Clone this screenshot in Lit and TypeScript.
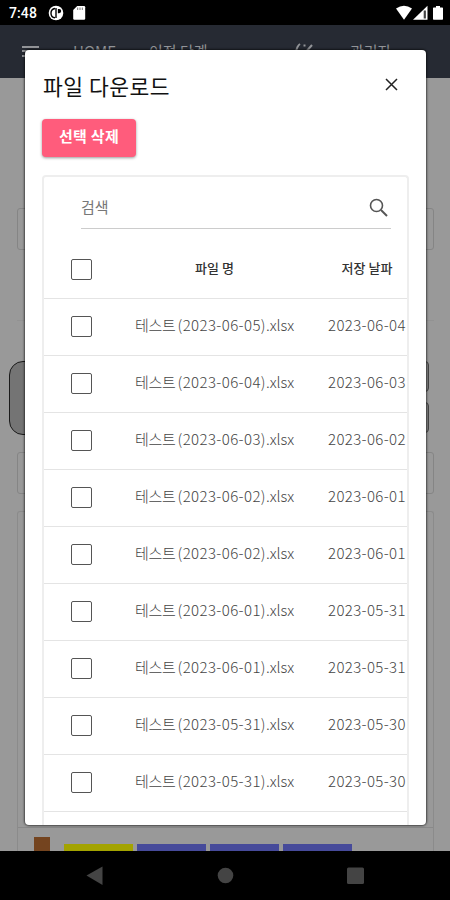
import { LitElement, html, css } from "lit";
import { customElement } from "lit/decorators.js";

const FILES: [string, string][] = [
  ["2023-06-05", "2023-06-04"],
  ["2023-06-04", "2023-06-03"],
  ["2023-06-03", "2023-06-02"],
  ["2023-06-02", "2023-06-01"],
  ["2023-06-02", "2023-06-01"],
  ["2023-06-01", "2023-05-31"],
  ["2023-06-01", "2023-05-31"],
  ["2023-05-31", "2023-05-30"],
  ["2023-05-31", "2023-05-30"],
];

@customElement("status-bar")
class StatusBar extends LitElement {
  static styles = css`
    :host { display: flex; height: 25px; background: #000; color: #fff; align-items: center; }
    .time { font: 500 14px/25px Roboto, sans-serif; margin-left: 9px; width: 39px; letter-spacing: 0.1px; padding-top: 1px; }
    .left { display: block; }
    .right { margin-left: auto; display: block; }
  `;
  render() {
    return html`
      <span class="time">7:48</span>
      <svg class="left" width="40" height="25" viewBox="48 0 40 25">
        <circle cx="56" cy="13" r="7.3" fill="#fff" />
        <path d="M55 8.500A4.700 4.700 0 0 0 55 17.800" fill="none" stroke="#000" stroke-width="1.400" />
        <path d="M56 8v10" stroke="#000" stroke-width="1.400" />
        <path d="M57.900 9h1.200a2 2 0 0 1 0 4.200h-1.200z" fill="#000" />
        <path d="M77.200 6H84q1.200 0 1.200 1.200v11.400q0 1.200-1.200 1.200h-9.600q-1.200 0-1.200-1.200V10z" fill="#fff" />
        <path d="M77.700 7.500v2.500M80 7.500v2.500M82.300 7.500v2.500" stroke="#777" stroke-width="1" />
      </svg>
      <svg class="right" width="54" height="25" viewBox="396 0 54 25">
        <path d="M396 8.600Q404 3 412 8.600L404 19.800z" fill="#fff" />
        <path d="M427.500 5.800V19.800H413z" fill="#fff" />
        <path d="M424.800 10.500v8" stroke="#444" stroke-width="2.200" />
        <path d="M436 6h4v1.600h2.300q.7 0 .7.7v10.800q0 .7-.7.7h-8.600q-.7 0-.7-.7V8.300q0-.7.7-.7H436z" fill="#fff" />
      </svg>
    `;
  }
}

@customElement("nav-bar")
class NavBar extends LitElement {
  static styles = css`
    :host { display: block; height: 49px; background: #000; }
    svg { display: block; }
  `;
  render() {
    return html`<svg width="450" height="49" viewBox="0 851 450 49" fill="#444">
      <path d="M86.500 875.500 102.500 866.500v18.500z" />
      <circle cx="225.500" cy="875.500" r="7.800" />
      <rect x="347" y="867.500" width="17" height="16.500" rx="1.500" />
    </svg>`;
  }
}

@customElement("page-behind")
class PageBehind extends LitElement {
  static styles = css`
    :host { display: flex; flex-direction: column; flex: 1; min-height: 0; background: #999; overflow: hidden;
      font-family: "Noto Sans CJK KR", sans-serif; }
    .top { height: 53px; flex: none; background: #262a33; display: flex; color: #929498; font-size: 15px; line-height: 22px;
      padding-top: 15px; box-sizing: border-box; white-space: nowrap; }
    .menu { margin: 6px 33px 0 22px; flex: none; }
    .home { width: 76px; }
    .step { width: 146px; }
    .icon { margin: 2px 33px 0 0; flex: none; }
    .content { display: flex; flex-direction: column; padding: 130px 16px 0 17px; flex: 1; min-height: 0; }
    .field { height: 42px; box-sizing: border-box; border: 1px solid #858585; border-radius: 3px; flex: none; }
    .rule { height: 1px; margin-top: 70px; background: #929292; flex: none; }
    .pair { display: flex; justify-content: space-between; margin: 40px 5px 17px -8px; height: 74px; flex: none; }
    .thumb { width: 100px; box-sizing: border-box; border: 1px solid #1b1b1b; border-radius: 14px; background: #747474; }
    .stack { display: flex; flex-direction: column; gap: 10px; }
    .btn { width: 60px; height: 31px; box-sizing: border-box; border: 1px solid #444; border-radius: 4px; background: #808080; }
    .chart { margin-top: 17px; flex: 1; border: 1px solid #8b8b8b; border-bottom: 0; border-radius: 3px 3px 0 0; display: flex;
      flex-direction: column; justify-content: flex-end; min-height: 0; }
    .bars { height: 24px; border-top: 1px solid #898989; display: flex; align-items: flex-end; gap: 4px; padding-left: 16px; box-sizing: border-box; }
    .bar { width: 69px; height: 7px; background: #464a9a; }
    .brown { width: 16px; height: 14px; background: #74441f; margin-right: 10px; }
    .yellow { background: #a3a300; }
  `;
  render() {
    return html`
      <div class="top">
        <svg class="menu" width="18" height="12" viewBox="0 0 18 12"><path d="M0 1h17M0 5h17M0 10h17" stroke="#929498" stroke-width="1.800" /></svg>
        <span class="home">HOME</span>
        <span class="step">이전 단계</span>
        <svg class="icon" width="22" height="20" viewBox="0 0 22 20" fill="none" stroke="#929498" stroke-width="2">
          <path d="M5 2Q2 4 1 10M9.500 2.500v2M10 11 17 3" />
        </svg>
        <span>관리자</span>
      </div>
      <div class="content">
        <div class="field"></div>
        <div class="rule"></div>
        <div class="pair">
          <div class="thumb"></div>
          <div class="stack"><div class="btn"></div><div class="btn"></div></div>
        </div>
        <div class="field"></div>
        <div class="chart">
          <div class="bars">
            <div class="bar brown"></div>
            <div class="bar yellow"></div>
            <div class="bar"></div><div class="bar"></div><div class="bar"></div>
          </div>
        </div>
      </div>
    `;
  }
}

@customElement("file-dialog")
class FileDialog extends LitElement {
  static styles = css`
    :host { display: flex; flex-direction: column; box-sizing: border-box; background: #fff; border-radius: 4px; overflow: hidden;
      padding: 19px 17px 0; font-family: "Noto Sans CJK KR", sans-serif; color: #222;
      box-shadow: 0 0 2px 1px rgba(0, 0, 0, 0.55); }
    .head { display: flex; justify-content: space-between; height: 32px; flex: none; }
    .title { font-size: 21.500px; line-height: 33px; color: #111; white-space: nowrap; letter-spacing: 0.500px; margin-left: 1px; }
    .close { margin: 9px 11px 0 0; }
    .remove { margin-top: 18px; width: 94px; height: 38px; flex: none; background: #ff5c7c; color: #fff; border-radius: 4px;
      font-size: 15px; font-weight: 700; line-height: 34px; letter-spacing: 0.300px; text-align: center;
      box-shadow: 0 1px 3px rgba(0, 0, 0, 0.4); white-space: nowrap; }
    .card { margin-top: 17.500px; flex: 1; min-height: 0; overflow: hidden; border: 2px solid #eee; border-bottom: 0;
      border-radius: 4px 4px 0 0; }
    .search { display: flex; justify-content: space-between; margin: 8px 16px 0 37px; height: 43px; border-bottom: 1px solid #ccc;
      color: #777; font-size: 15px; line-height: 44px; }
    .search svg { margin: 13px 2px 0 0; }
    .row { display: grid; grid-template-columns: 91px 193px 1fr; height: 57.050px; box-sizing: border-box; border-bottom: 1px solid #e4e4e4;
      align-items: center; font-size: 15px; font-weight: 300; color: #444; white-space: nowrap; }
    .header { height: 70px; padding-top: 12px; font-size: 13px; font-weight: 500; color: #333; }
    .box { width: 21px; height: 21px; box-sizing: border-box; border: 1.500px solid #555; border-radius: 2px; margin-left: 27px; }
    .name, .date { line-height: 22px; padding-bottom: 3px; letter-spacing: 0.370px; }
    .name { word-spacing: -1px; letter-spacing: -0.300px; }
    .day { letter-spacing: 0.400px; }
    .ext { letter-spacing: -0.050px; }
    .header .name { width: 159px; text-align: center; word-spacing: 0; letter-spacing: 0; }
    .header .date { width: 78px; text-align: center; letter-spacing: 0; }
  `;
  render() {
    return html`
      <div class="head">
        <span class="title">파일 다운로드</span>
        <svg class="close" width="13" height="13" viewBox="0 0 13 13"><path d="M1 1 12 12M12 1 1 12" stroke="#222" stroke-width="1.500" /></svg>
      </div>
      <div class="remove">선택 삭제</div>
      <div class="card">
        <div class="search">
          <span>검색</span>
          <svg width="20" height="20" viewBox="0 0 20 20" fill="none" stroke="#555">
            <circle cx="7.500" cy="7.500" r="6" stroke-width="1.600" /><path d="M12 12 18 18" stroke-width="2" />
          </svg>
        </div>
        <div class="row header"><i class="box"></i><span class="name">파일 명</span><span class="date">저장 날파</span></div>
        ${FILES.map(([name, date]) => html`
          <div class="row"><i class="box"></i><span class="name">테스트 <span class="day">(${name})</span><span class="ext">.xlsx</span></span><span class="date">${date}</span></div>
        `)}
      </div>
    `;
  }
}

@customElement("app-root")
class AppRoot extends LitElement {
  static styles = css`
    :host { display: flex; flex-direction: column; position: relative; width: 450px; height: 900px; overflow: hidden; }
    .modal { position: absolute; left: 25px; top: 50px; width: 401px; height: 775px; }
  `;
  render() {
    return html`
      <status-bar></status-bar>
      <page-behind></page-behind>
      <nav-bar></nav-bar>
      <file-dialog class="modal"></file-dialog>
    `;
  }
}
